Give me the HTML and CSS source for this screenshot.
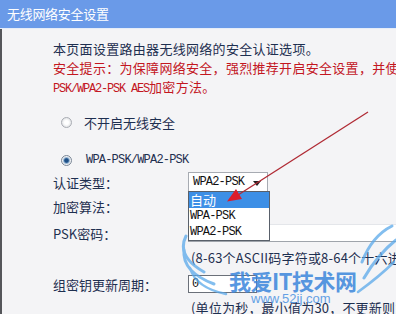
FILE: index.html
```html
<!DOCTYPE html>
<html lang="zh">
<head>
<meta charset="utf-8">
<title>无线网络安全设置</title>
<link rel="stylesheet" href="styles.css">
</head>
<body>
<div class="page">
  <div class="header">无线网络安全设置</div>
  <div class="content">
    <p class="intro">本页面设置路由器无线网络的安全认证选项。</p>
    <p class="warn">安全提示：为保障网络安全，强烈推荐开启安全设置，并使用<br><span class="mono tight">PSK/WPA2-PSK AES</span>加密方法。</p>
    <div class="radio-row first"><span class="radio"></span><span>不开启无线安全</span></div>
    <div class="radio-row second"><span class="radio checked"></span><span class="mono">WPA-PSK/WPA2-PSK</span></div>

    <div class="form">
      <div class="label row-auth">认证类型：</div>
      <div class="field row-auth">
        <div class="select">
          <span class="mono">WPA2-PSK</span>
          <span class="caret"></span>
          <ul class="options">
            <li class="active">自动</li>
            <li class="mono">WPA-PSK</li>
            <li class="mono">WPA2-PSK</li>
          </ul>
        </div>
      </div>

      <div class="label row-enc">加密算法：</div>
      <div class="field row-enc"></div>

      <div class="label row-psk">PSK密码：</div>
      <div class="field row-psk"><div class="input wide"></div></div>

      <div class="label row-hint"></div>
      <div class="field row-hint hint">(8-63个ASCII码字符或8-64个十六进制字符)</div>

      <div class="label row-grp">组密钥更新周期：</div>
      <div class="field row-grp"><div class="input short">0</div></div>

      <div class="label row-hint2"></div>
      <div class="field row-hint2 hint">(单位为秒，最小值为30，不更新则为0)</div>
    </div>
  </div>

  <svg class="arrow" width="396" height="314" viewBox="0 0 396 314">
    <line x1="368" y1="112" x2="238" y2="195" stroke="#b02a34" stroke-width="1.3"/>
    <polygon points="227,201.5 242,199 236,189" fill="#dc1c2a"/>
  </svg>

  <div class="watermark">
    <svg class="wings" width="396" height="314" viewBox="0 0 396 314">
      <g fill="none" stroke="#5aa9ea" stroke-linecap="round" opacity="0.75">
        <path d="M186 236 Q176 256 204 272" stroke-width="3"/>
        <path d="M184 250 Q182 272 214 284" stroke-width="3"/>
        <path d="M190 268 Q196 288 226 294" stroke-width="2.5"/>
        <path d="M392 226 Q372 236 362 262" stroke-width="3"/>
        <path d="M396 240 Q378 254 364 278" stroke-width="3"/>
        <path d="M394 262 Q380 276 358 292" stroke-width="2.5"/>
      </g>
    </svg>
    <div class="wm-title">我爱IT技术网</div>
    <div class="wm-url">www.52ij.com</div>
  </div>
</div>
</body>
</html>
```

FILE: styles.css
```css
html, body {
  margin: 0;
  padding: 0;
}
body {
  width: 396px;
  height: 314px;
  overflow: hidden;
  background: #f4f4f6;
  font-family: "Noto Sans CJK SC", "Noto Sans", sans-serif;
  font-size: 13px;
  color: #1e2f50;
}
.page {
  position: relative;
  width: 396px;
  height: 314px;
  overflow: hidden;
}
.header {
  height: 28px;
  line-height: 28px;
  background: #6a9ae8;
  color: #ffffff;
  padding-left: 7px;
  font-size: 13px;
  letter-spacing: -0.3px;
  border-bottom: 1px solid #e6edf8;
}
.content {
  border-left: 2px solid #55565a;
  padding-left: 51px;
  padding-top: 10px;
  height: 300px;
  box-sizing: border-box;
}
p {
  margin: 0;
  line-height: 19px;
}
.intro {
  letter-spacing: 0.3px;
}
.warn {
  color: #c3161f;
  white-space: nowrap;
  letter-spacing: 0.3px;
}
.mono {
  font-family: "Liberation Mono", "DejaVu Sans Mono", monospace;
  font-size: 12px;
  letter-spacing: -0.8px;
}
.tight {
  letter-spacing: -1.2px;
}
.radio-row {
  display: flex;
  align-items: center;
  height: 20px;
  margin-left: 8px;
}
.radio-row.first {
  margin-top: 13px;
}
.radio-row.second {
  margin-top: 18px;
  color: #1e2f50;
}
.radio-row .mono {
  margin-left: 2px;
}
.radio {
  width: 11px;
  height: 11px;
  border-radius: 50%;
  box-sizing: border-box;
  border: 1px solid #a9acb3;
  background: radial-gradient(circle, #ffffff 30%, #e2e3e6 75%);
  margin-right: 12px;
}
.radio.checked {
  border-color: #7a8696;
  background: radial-gradient(circle, #1d4f86 0 28%, #7ea3c8 42%, #eef0f3 62%);
}
.form {
  display: grid;
  grid-template-columns: 135px 1fr;
  margin-top: 2px;
}
.label, .field {
  display: flex;
  align-items: center;
  white-space: nowrap;
}
.row-auth { height: 20px; }
.row-enc { height: 20px; margin-top: 4px; }
.row-psk { height: 18px; margin-top: 8px; }
.row-hint { height: 18px; margin-top: 6px; }
.row-grp { height: 18px; margin-top: 9px; }
.row-hint2 { height: 18px; margin-top: 5px; }
.hint {
  color: #1e2f50;
  margin-left: 3px;
  letter-spacing: 0.2px;
}
.select {
  position: relative;
  width: 80px;
  height: 20px;
  box-sizing: border-box;
  border: 1px solid #a7abb2;
  background: #ffffff;
  display: flex;
  align-items: center;
  padding-left: 4px;
  color: #111;
}
.caret {
  position: absolute;
  right: 6px;
  top: 8px;
  width: 0;
  height: 0;
  border-left: 4px solid transparent;
  border-right: 4px solid transparent;
  border-top: 5px solid #222;
}
.options {
  position: absolute;
  left: -1px;
  top: 18px;
  width: 80px;
  margin: 0;
  padding: 0;
  list-style: none;
  background: #ffffff;
  border: 1px solid #59606a;
  z-index: 2;
}
.options li {
  height: 16px;
  line-height: 16px;
  padding-left: 1px;
  color: #111;
}
.options li.active {
  background: #3d8fe6;
  color: #ffffff;
  font-size: 13px;
}
.input {
  height: 18px;
  box-sizing: border-box;
  background: #ffffff;
  border: 1px solid #9fa4ab;
  border-top-color: #e4e6ea;
  display: flex;
  align-items: center;
  padding-left: 3px;
  font-family: "Liberation Mono", monospace;
  font-size: 12px;
  color: #111;
}
.input.wide {
  width: 240px;
}
.input.short {
  width: 69px;
  border-color: #6b7079;
}
.arrow {
  position: absolute;
  left: 0;
  top: 0;
  z-index: 5;
  pointer-events: none;
}
.watermark {
  position: absolute;
  left: 0;
  top: 0;
  width: 396px;
  height: 314px;
  pointer-events: none;
  z-index: 6;
}
.wings {
  position: absolute;
  left: 0;
  top: 0;
}
.wm-title {
  position: absolute;
  left: 229px;
  top: 266px;
  font-size: 22px;
  font-weight: bold;
  color: #3b86dc;
  opacity: 0.85;
  letter-spacing: -0.5px;
  line-height: 28px;
}
.wm-url {
  position: absolute;
  left: 251px;
  top: 292px;
  font-family: "Liberation Sans", sans-serif;
  font-size: 13px;
  color: #4b92e2;
  opacity: 0.85;
  line-height: 14px;
}
```
